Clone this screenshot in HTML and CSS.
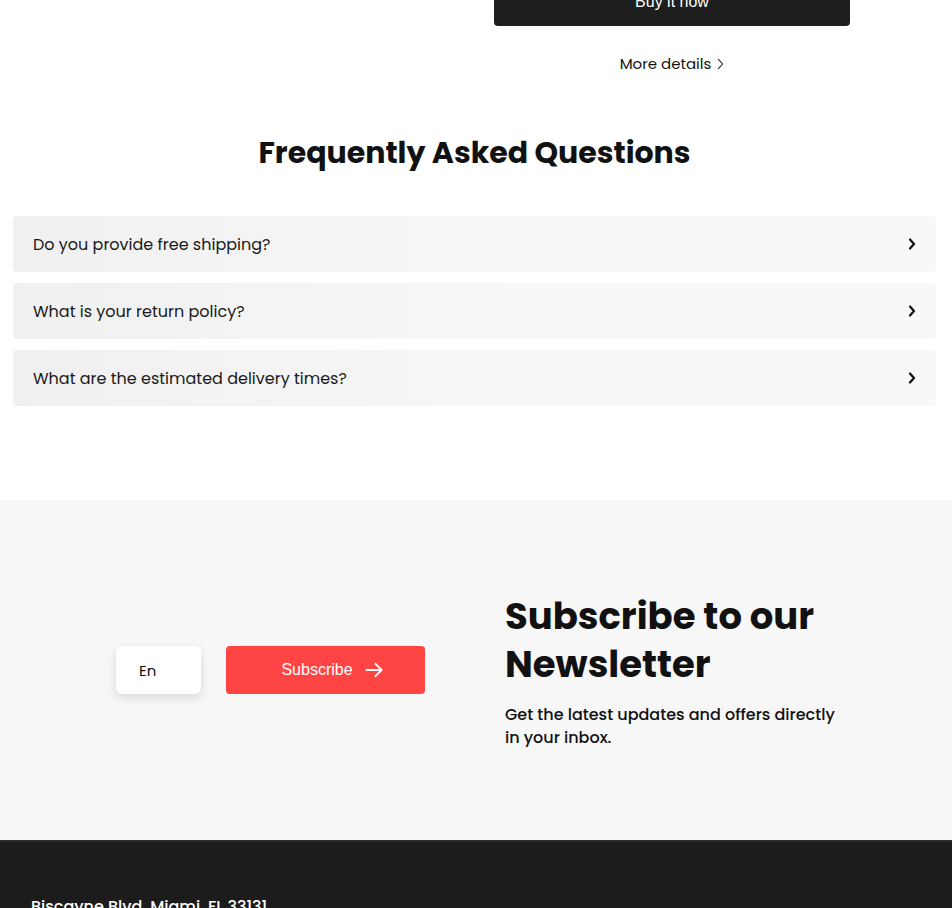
FILE: index.html
```html
<!DOCTYPE html>
<html lang="en">
<head>
<meta charset="utf-8">
<title>FAQ and Newsletter</title>
<link rel="stylesheet" href="styles.css">
</head>
<body>
<section class="product">
  <div class="product-media"></div>
  <div class="product-info">
    <button class="buy-btn">Buy it now</button>
    <a class="more-link" href="#">More details <svg class="more-chev" viewBox="0 0 8 14" width="7" height="12"><path d="M1.5 1.5 L6.5 7 L1.5 12.5" fill="none" stroke="#222" stroke-width="1.3" stroke-linecap="round" stroke-linejoin="round"/></svg></a>
  </div>
</section>

<section class="faq">
  <h2 class="faq-title">Frequently Asked Questions</h2>
  <div class="faq-list">
    <div class="faq-item"><span>Do you provide free shipping?</span><svg class="faq-chev" viewBox="0 0 8 12" width="8" height="12"><path d="M2 1.5 L6 6 L2 10.5" fill="none" stroke="#111" stroke-width="2.2" stroke-linecap="round" stroke-linejoin="round"/></svg></div>
    <div class="faq-item"><span>What is your return policy?</span><svg class="faq-chev" viewBox="0 0 8 12" width="8" height="12"><path d="M2 1.5 L6 6 L2 10.5" fill="none" stroke="#111" stroke-width="2.2" stroke-linecap="round" stroke-linejoin="round"/></svg></div>
    <div class="faq-item"><span>What are the estimated delivery times?</span><svg class="faq-chev" viewBox="0 0 8 12" width="8" height="12"><path d="M2 1.5 L6 6 L2 10.5" fill="none" stroke="#111" stroke-width="2.2" stroke-linecap="round" stroke-linejoin="round"/></svg></div>
  </div>
</section>

<section class="newsletter">
  <div class="nl-form">
    <div class="lang-box">En</div>
    <button class="sub-btn">Subscribe <svg viewBox="0 0 20 16" width="19" height="16"><path d="M1.5 8 H17.5 M11 1.5 L17.5 8 L11 14.5" fill="none" stroke="#fff" stroke-width="2" stroke-linecap="round" stroke-linejoin="round"/></svg></button>
  </div>
  <div class="nl-text">
    <h2 class="nl-title">Subscribe to our Newsletter</h2>
    <p class="nl-desc">Get the latest updates and offers directly in your inbox.</p>
  </div>
</section>

<footer class="footer">
  <p class="address">Biscayne Blvd, Miami, FL 33131</p>
</footer>
</body>
</html>
```
FILE: styles.css
```css
* { box-sizing: border-box; }
html, body { margin: 0; padding: 0; }
body {
  font-family: "Poppins", "Inter", "DejaVu Sans", sans-serif;
  color: #111;
  background: #fff;
  width: 952px;
}
.product {
  display: grid;
  grid-template-columns: 494px 356px;
  margin-top: -22px;
}
.product-info {
  display: flex;
  flex-direction: column;
  align-items: center;
}
.buy-btn {
  width: 356px;
  height: 48px;
  background: #1e1e1e;
  color: #fff;
  border: 0;
  border-radius: 4px;
  font-family: "Liberation Sans", Arial, sans-serif;
  font-size: 16px;
  padding-top: 1px;
}
.more-link {
  margin-top: 27px;
  font-size: 15px;
  color: #111;
  text-decoration: none;
  display: flex;
  align-items: center;
  gap: 6px;
  line-height: 22px;
}
.faq {
  padding: 58px 16px 0 13px;
}
.faq-title {
  margin: 0 0 43px;
  text-align: center;
  font-size: 30px;
  font-weight: 700;
  line-height: 40px;
}
.faq-list {
  display: flex;
  flex-direction: column;
  gap: 11px;
}
.faq-item {
  height: 56px;
  border-radius: 4px;
  background: linear-gradient(90deg, #f0f0f0 0%, #f8f8f8 60%, #f8f8f8 100%);
  display: flex;
  align-items: center;
  justify-content: space-between;
  padding: 0 20px 0 20px;
  font-size: 16px;
  color: #1a1a1a;
}
.newsletter {
  margin-top: 94px;
  background: #f7f7f7;
  height: 340px;
  display: flex;
  align-items: center;
}
.nl-form {
  width: 505px;
  padding-left: 116px;
  display: flex;
  align-items: center;
  gap: 25px;
}
.lang-box {
  width: 85px;
  height: 48px;
  background: #fff;
  border-radius: 6px;
  box-shadow: 0 4px 10px rgba(0,0,0,0.12);
  display: flex;
  align-items: center;
  padding-left: 23px;
  font-size: 15px;
}
.sub-btn {
  width: 199px;
  height: 48px;
  background: #ff4444;
  color: #fff;
  border: 0;
  border-radius: 4px;
  font-family: "Liberation Sans", Arial, sans-serif;
  font-size: 16px;
  display: flex;
  align-items: center;
  justify-content: center;
  gap: 12px;
  padding-left: 20px;
}
.nl-text { width: 340px; }
.nl-title {
  margin: 0;
  font-size: 37px;
  font-weight: 700;
  line-height: 48px;
}
.nl-desc {
  margin: 15px 0 0;
  font-size: 16px;
  line-height: 23px;
  font-weight: 500;
}
.footer {
  background: #1c1c1c;
  border-top: 2px solid #2a2a2a;
  height: 70px;
  padding: 52px 31px 0;
}
.address {
  margin: 0;
  color: #fff;
  font-size: 16px;
  font-weight: 500;
}
```
